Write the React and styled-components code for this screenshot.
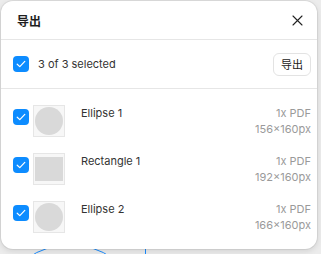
import React from 'react';
import styled, { createGlobalStyle } from 'styled-components';

const GlobalStyle = createGlobalStyle`
  html, body {
    margin: 0;
    padding: 0;
    background: #ececec;
    font-family: Inter, "Noto Sans CJK SC", sans-serif;
  }
`;

const Stage = styled.div`
  position: relative;
  width: 321px;
  height: 254px;
  overflow: hidden;
  padding: 1px 0 0 1px;
  box-sizing: border-box;
`;

const Canvas = styled.svg`
  position: absolute;
  left: 0;
  top: 0;
`;

const Panel = styled.div`
  position: relative;
  width: 316px;
  height: 248px;
  background: #fff;
  border-radius: 12px;
  box-shadow: 0 0 0 1px rgba(0, 0, 0, 0.06), 0 2px 6px rgba(0, 0, 0, 0.12);
  display: flex;
  flex-direction: column;
`;

const Header = styled.div`
  display: flex;
  align-items: center;
  justify-content: space-between;
  height: 39px;
  padding: 0 13px 0 16px;
  border-bottom: 1px solid #e6e6e6;
`;

const Title = styled.div`
  font-size: 12px;
  font-weight: 700;
  color: #1f1f1f;
`;

const CloseButton = styled.button`
  border: none;
  background: none;
  padding: 0;
  width: 14px;
  height: 14px;
  display: flex;
  align-items: center;
  justify-content: center;
`;

const Toolbar = styled.div`
  display: flex;
  align-items: center;
  height: 49px;
  padding: 0 6px 0 12px;
  border-bottom: 1px solid #e6e6e6;
`;

const Label = styled.span`
  font-size: 11px;
  color: #333;
  margin-left: 9px;
  flex: 1;
`;

const ExportButton = styled.button`
  width: 38px;
  height: 23px;
  border: 1px solid #e3e3e3;
  border-radius: 6px;
  background: #fff;
  font-family: inherit;
  font-size: 11px;
  color: #222;
  padding: 0;
`;

const List = styled.div`
  display: flex;
  flex-direction: column;
  padding-top: 16px;
`;

const Item = styled.div`
  display: flex;
  align-items: flex-start;
  height: 48px;
  padding: 0 6px 0 12px;
`;

const Box = styled.span`
  width: 16px;
  height: 16px;
  border-radius: 4px;
  background: #0d8cff;
  display: flex;
  align-items: center;
  justify-content: center;
  flex-shrink: 0;
  margin-top: ${(p) => p.$top || 0}px;
`;

const Thumb = styled.div`
  width: 30px;
  height: 30px;
  margin-left: 4px;
  border: 1px solid #e6e6e6;
  display: flex;
  align-items: center;
  justify-content: center;
  background: #f7f7f7;
  flex-shrink: 0;
`;

const Shape = styled.div`
  width: 28px;
  height: ${(p) => (p.$rect ? 24 : 28)}px;
  border-radius: ${(p) => (p.$rect ? 0 : '50%')};
  background: #d9d9d9;
`;

const Name = styled.div`
  font-size: 11px;
  color: #333;
  margin-left: 16px;
  flex: 1;
  line-height: 16px;
`;

const Meta = styled.div`
  font-size: 11px;
  color: #9a9a9a;
  text-align: right;
  line-height: 16px;
`;

const Check = () => (
  <svg width="10" height="8" viewBox="0 0 10 8">
    <path d="M1.2 4.2 L3.8 6.6 L8.8 1.4" fill="none" stroke="#fff" strokeWidth="1.2" strokeLinecap="round" strokeLinejoin="round" />
  </svg>
);

const items = [
  { name: 'Ellipse 1', size: '156×160px', rect: false },
  { name: 'Rectangle 1', size: '192×160px', rect: true },
  { name: 'Ellipse 2', size: '166×160px', rect: false },
];

export default function App() {
  return (
    <>
      <GlobalStyle />
      <Stage>
        <Canvas width="321" height="254">
          <ellipse cx="70" cy="290" rx="60" ry="45" fill="none" stroke="#1a8cff" strokeWidth="1" />
          <line x1="145.5" y1="240" x2="145.5" y2="254" stroke="#1a8cff" strokeWidth="1" />
        </Canvas>
        <Panel>
          <Header>
            <Title>导出</Title>
            <CloseButton>
              <svg width="11" height="11" viewBox="0 0 11 11">
                <path d="M1 1 L10 10 M10 1 L1 10" stroke="#222" strokeWidth="1.1" strokeLinecap="round" />
              </svg>
            </CloseButton>
          </Header>
          <Toolbar>
            <Box>
              <Check />
            </Box>
            <Label>3 of 3 selected</Label>
            <ExportButton>导出</ExportButton>
          </Toolbar>
          <List>
            {items.map((it) => (
              <Item key={it.name}>
                <Box $top={4}>
                  <Check />
                </Box>
                <Thumb>
                  <Shape $rect={it.rect} />
                </Thumb>
                <Name>{it.name}</Name>
                <Meta>
                  1x PDF
                  <br />
                  {it.size}
                </Meta>
              </Item>
            ))}
          </List>
        </Panel>
      </Stage>
    </>
  );
}
